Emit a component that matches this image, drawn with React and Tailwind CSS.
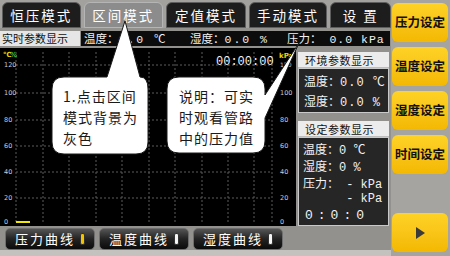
import React from "react";

const cjk = { fontFamily: '"Noto Sans CJK SC", "Noto Sans", sans-serif' };

const tabs = [
  { label: "恒压模式", active: false, w: "w-[79px]" },
  { label: "区间模式", active: true, w: "w-[80px]" },
  { label: "定值模式", active: false, w: "w-[80px]" },
  { label: "手动模式", active: false, w: "w-[79px]" },
  { label: "设 置", active: false, w: "w-[61px]" },
];

const hLines = [17, 45, 72, 98, 124, 150];
const vLines = [16, 43, 69, 96, 122, 149, 175, 202, 228, 254, 272];
const leftLabels = [
  ["120", 17],
  ["100", 45],
  ["80", 72],
  ["60", 98],
  ["40", 124],
  ["20", 150],
  ["0", 174],
];

// digits in the panel font are wide, so use a mono face
const Num = ({ children, className = "" }) => (
  <span className={`font-['Liberation_Mono'] whitespace-pre ${className}`}>{children}</span>
);

const Chart = () => (
  <div className="w-[296px] h-[178px] bg-black">
    <svg width="296" height="178" viewBox="0 0 296 178">
      {hLines.map((y) => (
        <line key={y} x1="16" y1={y} x2="272" y2={y} stroke="#5c5c5c" strokeDasharray="2 2" />
      ))}
      {vLines.map((x) => (
        <line key={x} x1={x} y1="4" x2={x} y2="176" stroke="#5c5c5c" strokeDasharray="2 2" />
      ))}
      <text x="3" y="9" fontSize="7" fontWeight="bold" fill="#e8d400" fontFamily="DejaVu Sans">℃</text>
      <text x="10" y="9" fontSize="7" fontWeight="bold" fill="#3ec43e" fontFamily="DejaVu Sans">%</text>
      {leftLabels.map(([t, y]) => (
        <text key={t} x="4" y={y + 2} fontSize="6.5" fill="#cfcfcf" fontFamily="DejaVu Sans">{t}</text>
      ))}
      {leftLabels.slice(1).map(([t, y]) => (
        <text key={t} x="280" y={y + 2} fontSize="6.5" fill="#cfcfcf" fontFamily="DejaVu Sans">{t}</text>
      ))}
      <text x="280" y="19" fontSize="6" fill="#cfcfcf" fontFamily="DejaVu Sans">120</text>
      <text x="279" y="10" fontSize="7" fontWeight="bold" fill="#e8d400" fontFamily="DejaVu Sans">kPa</text>
      <text x="216" y="17" fontSize="12" fill="#f0f0f0" fontFamily="Liberation Mono">00:00:00</text>
      <line x1="16" y1="174" x2="30" y2="174" stroke="#f0e800" strokeWidth="2" />
    </svg>
  </div>
);

const Header = ({ children, className }) => (
  <div className={`h-[16px] bg-[#ececec] border-b border-[#bdbdbd] text-[11px] leading-[16px] text-[#111] pl-[7px] tracking-[0.5px] ${className}`}>
    {children}
  </div>
);

const Row = ({ children, className = "" }) => (
  <div className={`h-[12px] text-[12px] leading-[12px] text-[#f2f2f2] whitespace-pre ${className}`}>{children}</div>
);

const CurveButton = ({ label, yellow }) => (
  <div className="w-[90px] h-[22px] rounded-[5px] border border-[#6e6e6e] bg-gradient-to-b from-[#555] via-[#232323] to-[#0b0b0b] flex items-center justify-center gap-[5px]">
    <span className="text-white text-[13px] tracking-[2px]">{label}</span>
    <span
      className={`w-[5px] h-[12px] rounded-[2px] border border-[#333] ${yellow ? "bg-[#f2c400]" : "bg-[#f4f4f4]"}`}
    />
  </div>
);

const YellowButton = ({ children, className = "" }) => (
  <div
    className={`w-[56px] h-[39px] rounded-[6px] bg-gradient-to-b from-[#ffd226] to-[#f3b800] flex items-center justify-center text-[12.5px] font-bold text-[#111] ${className}`}
  >
    {children}
  </div>
);

export default function App() {
  return (
    <div className="relative w-[450px] h-[256px] overflow-hidden bg-[#a6a4a1] flex" style={cjk}>
      {/* left part */}
      <div className="w-[391px] h-full flex flex-col bg-[#93918e]">
        <div className="h-[28px] flex items-end gap-[3px] pl-[2px] bg-[#a3a19e]">
          {tabs.map((t) => (
            <div
              key={t.label}
              className={`${t.w} h-[26px] rounded-t-[6px] border flex items-center justify-center text-[13.5px] tracking-[2px] text-white ${
                t.active ? "bg-[#8c8c8c] border-[#b5b5b5]" : "bg-[#1d1d1d] border-[#5e5e5e]"
              }`}
            >
              {t.label}
            </div>
          ))}
        </div>

        <div className="mt-[3px] h-[15px] flex">
          <div className="w-[80px] bg-[#e6e6e6] text-[11px] leading-[15px] text-[#111] pl-[2px]">实时参数显示</div>
          <div className="w-[309px] ml-[1px] bg-[#0c0c0c] text-[11.5px] leading-[15px] text-[#f0f0f0] flex">
            <span className="pl-[3px] w-[109px]">
              温度：<Num className="tracking-[2px]">0.0 </Num>℃
            </span>
            <span className="w-[97px]">
              湿度：<Num className="tracking-[2px]">0.0 %</Num>
            </span>
            <span>
              压力：<Num className="tracking-[1px]"> 0.0 kPa</Num>
            </span>
          </div>
        </div>

        <div className="mt-[2px] flex gap-[2px]">
          <Chart />
          <div className="w-[91px] h-[178px] flex flex-col">
            <Header className="mt-[4px]">环境参数显示</Header>
            <div className="h-[45px] bg-[#262626] border border-[#c9c9c9] flex flex-col justify-center gap-[8px] pl-[5px]">
              <Row>
                温度：<Num className="tracking-[1px]">0.0 </Num>℃
              </Row>
              <Row>
                湿度：<Num className="tracking-[1px]">0.0 %</Num>
              </Row>
            </div>
            <Header className="mt-[8px]">设定参数显示</Header>
            <div className="flex-1 bg-[#262626] border border-[#c9c9c9] flex flex-col pl-[4px] pt-[5px]">
              <Row>
                温度：<Num>0 </Num>℃
              </Row>
              <Row className="mt-[5px]">
                湿度：<Num>0 %</Num>
              </Row>
              <Row className="mt-[5px]">
                压力：<Num> - kPa</Num>
              </Row>
              <Row className="mt-[2px]">
                <Num>      - kPa</Num>
              </Row>
              <Row className="mt-[5px] pl-[2px]">
                <Num className="text-[13px] tracking-[5px]">0:0:0</Num>
              </Row>
            </div>
          </div>
        </div>

        <div className="mt-[2px] h-[22px] flex gap-[4px] pl-[5px]">
          <CurveButton label="压力曲线" yellow />
          <CurveButton label="温度曲线" />
          <CurveButton label="湿度曲线" />
        </div>
        <div className="mt-auto h-[6px] bg-[#c4c2bf]" />
      </div>

      {/* right yellow buttons */}
      <div className="w-[59px] h-full flex flex-col gap-[5px] pt-[3px] pl-[1px] pb-[4px]">
        <YellowButton>压力设定</YellowButton>
        <YellowButton>温度设定</YellowButton>
        <YellowButton>湿度设定</YellowButton>
        <YellowButton>时间设定</YellowButton>
        <YellowButton className="mt-auto h-[38px]">
          <svg width="10" height="12" viewBox="0 0 10 12">
            <polygon points="1,0 10,6 1,12" fill="#3a3a3a" />
          </svg>
        </YellowButton>
      </div>

      {/* callout bubbles */}
      <svg className="absolute inset-0 pointer-events-none" width="450" height="256" viewBox="0 0 450 256">
        <path
          d="M64 77 L107 77 L125 21 L140 77 Q148 77 148 89 L148 142 Q148 154 136 154 L64 154 Q52 154 52 142 L52 89 Q52 77 64 77 Z"
          fill="#fff"
          stroke="#1a1a1a"
          strokeWidth="1"
        />
        <path
          d="M179 77 L253 77 Q265 77 265 89 L265 95 L299 43 L265 118 L265 141 Q265 153 253 153 L179 153 Q167 153 167 141 L167 89 Q167 77 179 77 Z"
          fill="#fff"
          stroke="#1a1a1a"
          strokeWidth="1"
        />
      </svg>
      <div className="absolute left-[63px] top-[86px] text-[14px] leading-[21px] tracking-[1px] text-[#1a1a1a]">
        <div>1.点击区间</div>
        <div>模式背景为</div>
        <div>灰色</div>
      </div>
      <div className="absolute left-[179px] top-[86px] text-[14px] leading-[21px] tracking-[1px] text-[#1a1a1a]">
        <div>说明：可实</div>
        <div>时观看管路</div>
        <div>中的压力值</div>
      </div>
    </div>
  );
}
